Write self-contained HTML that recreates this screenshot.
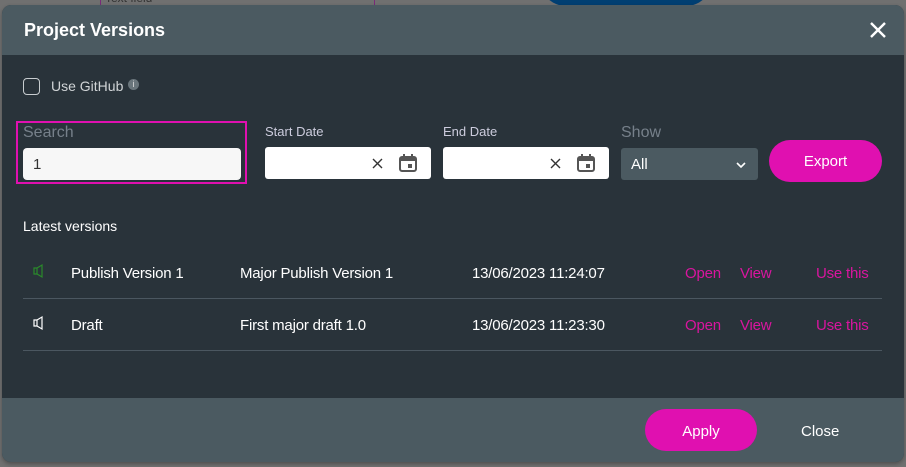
<!DOCTYPE html>
<html><head><style>
*{margin:0;padding:0;box-sizing:border-box}
body{width:906px;height:467px;background:#707070;font-family:"Liberation Sans",sans-serif;position:relative;overflow:hidden;color:#fff}
.bg1{position:absolute;left:100px;top:0;width:275px;height:6px;border-left:1px solid #7a2a7a;border-right:1px solid #7a2a7a}
.bg1 span{position:absolute;left:4px;top:-9px;font-size:12px;color:#333}
.blue{position:absolute;left:540px;top:-20px;width:172px;height:26px;background:#003f72;border-radius:0 0 80px 80px}
.modal{position:absolute;left:2px;top:5px;width:902px;height:457px;border-radius:9px;overflow:hidden;background:#29333a;box-shadow:0 2px 4px rgba(0,0,0,.3)}
.hd{height:50px;background:#4b5a61;position:relative}
.hd h1{position:absolute;left:22px;top:15px;font-size:18px;font-weight:bold}
.x{position:absolute;right:17px;top:16px}
.ft{position:absolute;left:0;bottom:0;width:100%;height:64px;background:#4b5a61}
.abs{position:absolute}
.pink{color:#d9159f}
.inp{position:absolute;background:#fff;border-radius:3px;height:32px}
.r{font-size:15px;letter-spacing:-0.2px}
</style></head><body>
<div class="bg1"><span>Text field</span></div>
<div class="blue"></div>
<div class="modal">
<div class="hd"><h1>Project Versions</h1>
<svg class="x" width="18" height="18" viewBox="0 0 18 18"><path d="M2 2L16 16M16 2L2 16" stroke="#fff" stroke-width="2.4"/></svg></div>
<div class="abs" style="left:21px;top:73px;width:17px;height:17px;border:1.5px solid #c8cdd0;border-radius:4px"></div>
<div class="abs" style="left:49px;top:73px;font-size:14px;color:#d0d4d6">Use GitHub</div>
<div class="abs" style="left:126px;top:74px;width:11px;height:11px;border-radius:50%;background:#6a767c;font-size:9px;text-align:center;line-height:11px;color:#ddd">i</div>
<div class="abs" style="left:14px;top:116px;width:231px;height:63px;border:2px solid #e010b0"></div>
<div class="abs" style="left:21px;top:119px;font-size:16px;color:#76808a">Search</div>
<div class="inp" style="left:21px;top:143px;width:218px;border-radius:4px;background:#f7f7f7"><span class="abs" style="left:10px;top:8px;font-size:15px;color:#333">1</span></div>
<div class="abs" style="left:263px;top:119px;font-size:13px;color:#ccd">Start Date</div>
<div class="inp" style="left:263px;top:142px;width:166px">
<svg class="abs" style="left:107px;top:11px" width="11" height="11" viewBox="0 0 11 11"><path d="M1 1L10 10M10 1L1 10" stroke="#333" stroke-width="1.4"/></svg>
<svg class="abs" style="left:133px;top:6px" width="20" height="20" viewBox="0 0 20 20"><rect x="2" y="4" width="16" height="14" rx="2" fill="none" stroke="#555" stroke-width="2"/><rect x="2" y="4" width="16" height="4" fill="#555"/><rect x="5" y="1" width="2" height="4" fill="#555"/><rect x="13" y="1" width="2" height="4" fill="#555"/><rect x="10" y="11" width="4" height="4" fill="#555"/></svg></div>
<div class="abs" style="left:441px;top:119px;font-size:13px;color:#ccd">End Date</div>
<div class="inp" style="left:441px;top:142px;width:166px">
<svg class="abs" style="left:107px;top:11px" width="11" height="11" viewBox="0 0 11 11"><path d="M1 1L10 10M10 1L1 10" stroke="#333" stroke-width="1.4"/></svg>
<svg class="abs" style="left:133px;top:6px" width="20" height="20" viewBox="0 0 20 20"><rect x="2" y="4" width="16" height="14" rx="2" fill="none" stroke="#555" stroke-width="2"/><rect x="2" y="4" width="16" height="4" fill="#555"/><rect x="5" y="1" width="2" height="4" fill="#555"/><rect x="13" y="1" width="2" height="4" fill="#555"/><rect x="10" y="11" width="4" height="4" fill="#555"/></svg></div>
<div class="abs" style="left:619px;top:119px;font-size:16px;color:#76808a">Show</div>
<div class="abs" style="left:619px;top:143px;width:137px;height:32px;background:#4b5a61;border-radius:3px"><span class="abs" style="left:10px;top:8px;font-size:15px">All</span>
<svg class="abs" style="left:115px;top:13px" width="10" height="8" viewBox="0 0 10 8"><path d="M1 2L5 6L9 2" stroke="#fff" stroke-width="1.6" fill="none"/></svg></div>
<div class="abs" style="left:767px;top:135px;width:113px;height:42px;background:#e010b0;border-radius:21px;text-align:center;line-height:44px;font-size:15px">Export</div>
<div class="abs" style="left:21px;top:213px;font-size:14px">Latest versions</div>
<svg class="abs" style="left:30px;top:258px" width="16" height="16" viewBox="0 0 16 16"><path d="M2 5h3v6H2zM5 5l5-3v12l-5-3" stroke="#2a8a2a" fill="none" stroke-width="1.2"/></svg>
<div class="abs r" style="left:69px;top:260px">Publish Version 1</div>
<div class="abs r" style="left:238px;top:260px">Major Publish Version 1</div>
<div class="abs r" style="left:470px;top:260px">13/06/2023 11:24:07</div>
<div class="abs pink r" style="left:683px;top:260px">Open</div>
<div class="abs pink r" style="left:738px;top:260px">View</div>
<div class="abs pink r" style="left:814px;top:260px">Use this</div>
<div class="abs" style="left:21px;top:293px;width:859px;height:1px;background:#4b5760"></div>
<svg class="abs" style="left:30px;top:310px" width="16" height="16" viewBox="0 0 16 16"><path d="M2 5h3v6H2zM5 5l5-3v12l-5-3" stroke="#fff" fill="none" stroke-width="1.2"/></svg>
<div class="abs r" style="left:69px;top:312px">Draft</div>
<div class="abs r" style="left:238px;top:312px">First major draft 1.0</div>
<div class="abs r" style="left:470px;top:312px">13/06/2023 11:23:30</div>
<div class="abs pink r" style="left:683px;top:312px">Open</div>
<div class="abs pink r" style="left:738px;top:312px">View</div>
<div class="abs pink r" style="left:814px;top:312px">Use this</div>
<div class="abs" style="left:21px;top:345px;width:859px;height:1px;background:#4b5760"></div>
<div class="ft">
<div class="abs" style="left:643px;top:11px;width:112px;height:42px;background:#e010b0;border-radius:21px;text-align:center;line-height:45px;font-size:15px">Apply</div>
<div class="abs" style="left:799px;top:25px;font-size:15px">Close</div>
</div>
</div>
</body></html>
